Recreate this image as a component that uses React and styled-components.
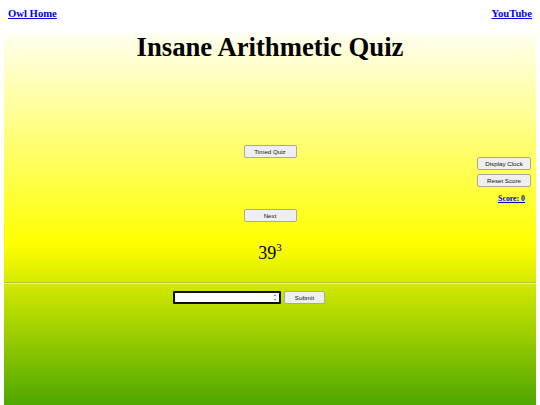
import React from "react";
import styled, { createGlobalStyle } from "styled-components";

const Global = createGlobalStyle`
  html, body { margin: 0; padding: 0; background: #ffffff; overflow: hidden; }
  body { font-family: "Liberation Serif", "Times New Roman", serif; }
`;

const Header = styled.div`
  display: flex;
  justify-content: space-between;
  align-items: center;
  height: 14px;
  padding: 6px 8px 0;
`;

const NavLink = styled.a`
  font-family: "Liberation Serif", serif;
  font-weight: bold;
  font-size: 10.67px;
  line-height: 12px;
  color: #0000ee;
  text-decoration: underline;
`;

const Panel = styled.div`
  margin: 10px 4px 0;
  min-height: calc(100vh - 30px);
  background: linear-gradient(to bottom, #ffffff 0px, #ffffe8 10px, #ffff00 214px, #008000 446px);
  display: flex;
  flex-direction: column;
`;

const Title = styled.h1`
  margin: 0;
  font-family: "Liberation Serif", serif;
  font-weight: bold;
  font-size: 26.7px;
  line-height: 34px;
  text-align: center;
  color: #000;
`;

const Stage = styled.div`
  display: grid;
  grid-template-columns: 1fr auto 1fr;
  margin-top: 81px;
  height: 137px;
`;

const CenterCol = styled.div`
  grid-column: 2;
  display: flex;
  flex-direction: column;
  align-items: center;
`;

const SideCol = styled.div`
  grid-column: 3;
  justify-self: end;
  display: flex;
  flex-direction: column;
  align-items: flex-end;
  padding: 12px 5px 0 0;
  gap: 4px;
`;

const Btn = styled.button`
  width: ${(p) => p.$w || 53}px;
  height: 13px;
  margin: ${(p) => p.$mt || 0}px 0 0;
  padding: 0;
  box-sizing: border-box;
  font-family: "Liberation Sans", Arial, sans-serif;
  font-size: 6.2px;
  line-height: 11px;
  color: #111;
  background: #efefef;
  border: 1px solid #a9a9a0;
  border-radius: 2px;
`;

const Score = styled.a`
  margin: 3px 6px 0 0;
  font-family: "Liberation Serif", serif;
  font-weight: bold;
  font-size: 7.8px;
  color: #0000cc;
  text-decoration: underline;
`;

const Problem = styled.div`
  margin-top: 20px;
  font-family: "Liberation Serif", serif;
  font-size: 18px;
  line-height: 22px;
  color: #000;
  sup {
    font-size: 11px;
    vertical-align: 8px;
    line-height: 0;
  }
`;

const Rule = styled.hr`
  margin: 0;
  height: 0;
  border: none;
  border-top: 1px solid rgba(150, 150, 110, 0.45);
  border-bottom: 1px solid rgba(255, 255, 230, 0.55);
`;

const AnswerRow = styled.div`
  display: flex;
  align-items: flex-start;
  justify-content: center;
  gap: 3px;
  padding: 7px 42px 0 0;
`;

const Field = styled.div`
  position: relative;
  width: 108px;
  height: 13px;
`;

const Input = styled.input`
  display: block;
  width: 100%;
  height: 100%;
  box-sizing: border-box;
  border: 2px solid #111;
  border-radius: 1px;
  background: #fff;
  padding: 0 2px;
  font-size: 7px;
  outline: none;
`;

const Spin = styled.svg`
  position: absolute;
  right: 4px;
  top: 2px;
`;

export default function App() {
  return (
    <>
      <Global />
      <Header>
        <NavLink href="#">Owl Home</NavLink>
        <NavLink href="#">YouTube</NavLink>
      </Header>
      <Panel>
        <Title>Insane Arithmetic Quiz</Title>
        <Stage>
          <CenterCol>
            <Btn>Timed Quiz</Btn>
            <Btn $mt={51}>Next</Btn>
            <Problem>
              39<sup>3</sup>
            </Problem>
          </CenterCol>
          <SideCol>
            <Btn $w={54}>Display Clock</Btn>
            <Btn $w={54}>Reset Score</Btn>
            <Score href="#">Score: 0</Score>
          </SideCol>
        </Stage>
        <Rule />
        <AnswerRow>
          <Field>
            <Input type="text" />
            <Spin width="4" height="9" viewBox="0 0 4 9">
              <path d="M0.5 3 L2 1.2 L3.5 3 Z" fill="#888" />
              <path d="M0.5 6 L2 7.8 L3.5 6 Z" fill="#888" />
            </Spin>
          </Field>
          <Btn $w={41}>Submit</Btn>
        </AnswerRow>
      </Panel>
    </>
  );
}
